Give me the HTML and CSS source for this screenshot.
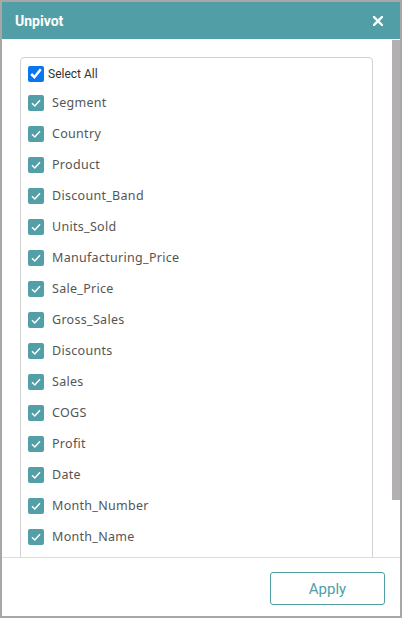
FILE: index.html
```html
<!DOCTYPE html>
<html>
<head>
<meta charset="utf-8">
<link rel="stylesheet" href="styles.css">
</head>
<body>
<div class="dialog">
  <div class="header">
    <span class="title">Unpivot</span>
    <svg class="close" width="10" height="10" viewBox="0 0 10 10"><path d="M1 1L9 9M9 1L1 9" stroke="#fff" stroke-width="2.4" stroke-linecap="square"/></svg>
  </div>
  <div class="body">
    <div class="listbox">
      <label class="all"><input type="checkbox" checked><span>Select All</span></label>
      <div class="item"><span class="cb"><svg width="16" height="16" viewBox="0 0 16 16"><path d="M4 8.2L6.8 11L12 5.2" fill="none" stroke="#fff" stroke-width="1.5"/></svg></span><span>Segment</span></div>
      <div class="item"><span class="cb"><svg width="16" height="16" viewBox="0 0 16 16"><path d="M4 8.2L6.8 11L12 5.2" fill="none" stroke="#fff" stroke-width="1.5"/></svg></span><span>Country</span></div>
      <div class="item"><span class="cb"><svg width="16" height="16" viewBox="0 0 16 16"><path d="M4 8.2L6.8 11L12 5.2" fill="none" stroke="#fff" stroke-width="1.5"/></svg></span><span>Product</span></div>
      <div class="item"><span class="cb"><svg width="16" height="16" viewBox="0 0 16 16"><path d="M4 8.2L6.8 11L12 5.2" fill="none" stroke="#fff" stroke-width="1.5"/></svg></span><span>Discount_Band</span></div>
      <div class="item"><span class="cb"><svg width="16" height="16" viewBox="0 0 16 16"><path d="M4 8.2L6.8 11L12 5.2" fill="none" stroke="#fff" stroke-width="1.5"/></svg></span><span>Units_Sold</span></div>
      <div class="item"><span class="cb"><svg width="16" height="16" viewBox="0 0 16 16"><path d="M4 8.2L6.8 11L12 5.2" fill="none" stroke="#fff" stroke-width="1.5"/></svg></span><span>Manufacturing_Price</span></div>
      <div class="item"><span class="cb"><svg width="16" height="16" viewBox="0 0 16 16"><path d="M4 8.2L6.8 11L12 5.2" fill="none" stroke="#fff" stroke-width="1.5"/></svg></span><span>Sale_Price</span></div>
      <div class="item"><span class="cb"><svg width="16" height="16" viewBox="0 0 16 16"><path d="M4 8.2L6.8 11L12 5.2" fill="none" stroke="#fff" stroke-width="1.5"/></svg></span><span>Gross_Sales</span></div>
      <div class="item"><span class="cb"><svg width="16" height="16" viewBox="0 0 16 16"><path d="M4 8.2L6.8 11L12 5.2" fill="none" stroke="#fff" stroke-width="1.5"/></svg></span><span>Discounts</span></div>
      <div class="item"><span class="cb"><svg width="16" height="16" viewBox="0 0 16 16"><path d="M4 8.2L6.8 11L12 5.2" fill="none" stroke="#fff" stroke-width="1.5"/></svg></span><span>Sales</span></div>
      <div class="item"><span class="cb"><svg width="16" height="16" viewBox="0 0 16 16"><path d="M4 8.2L6.8 11L12 5.2" fill="none" stroke="#fff" stroke-width="1.5"/></svg></span><span>COGS</span></div>
      <div class="item"><span class="cb"><svg width="16" height="16" viewBox="0 0 16 16"><path d="M4 8.2L6.8 11L12 5.2" fill="none" stroke="#fff" stroke-width="1.5"/></svg></span><span>Profit</span></div>
      <div class="item"><span class="cb"><svg width="16" height="16" viewBox="0 0 16 16"><path d="M4 8.2L6.8 11L12 5.2" fill="none" stroke="#fff" stroke-width="1.5"/></svg></span><span>Date</span></div>
      <div class="item"><span class="cb"><svg width="16" height="16" viewBox="0 0 16 16"><path d="M4 8.2L6.8 11L12 5.2" fill="none" stroke="#fff" stroke-width="1.5"/></svg></span><span>Month_Number</span></div>
      <div class="item"><span class="cb"><svg width="16" height="16" viewBox="0 0 16 16"><path d="M4 8.2L6.8 11L12 5.2" fill="none" stroke="#fff" stroke-width="1.5"/></svg></span><span>Month_Name</span></div>
      <div class="item item-hidden"></div>
    </div>
    <div class="scrollbar"></div>
  </div>
  <div class="footer">
    <button class="apply">Apply</button>
  </div>
</div>
</body>
</html>
```
FILE: styles.css
```css
* { box-sizing: border-box; }
html, body { margin: 0; padding: 0; background: #fff; }
.dialog {
  width: 402px;
  height: 618px;
  border: 2px solid #a9a7a6;
  display: flex;
  flex-direction: column;
  background: #fff;
  overflow: hidden;
}
.header {
  height: 37px;
  flex: none;
  background: #519ea6;
  display: flex;
  align-items: center;
  justify-content: space-between;
  padding: 0 17px 0 13px;
}
.title {
  font-family: Roboto, "Liberation Sans", sans-serif;
  font-weight: 700;
  font-size: 14px;
  color: #fff;
}
.close { display: block; }
.body {
  flex: 1;
  position: relative;
  overflow: hidden;
  padding: 18px 27px 0 18px;
  border-bottom: 1px solid #dcdcdc;
}
.scrollbar {
  position: absolute;
  top: 1px;
  right: 0;
  width: 8px;
  height: 460px;
  background: #b2b0b0;
}
.listbox {
  border: 1px solid #d2d2d2;
  border-radius: 4px;
  padding: 7px 6px 0 6px;
}
.all {
  display: flex;
  align-items: center;
  height: 18px;
  font-family: Roboto, "Liberation Sans", sans-serif;
  font-size: 12px;
  color: #333;
}
.all input {
  margin: 0 4px 0 1px;
  width: 16px;
  height: 16px;
  accent-color: #0a75f0;
}
.item {
  display: flex;
  align-items: center;
  height: 31px;
  font-family: "Noto Sans", "Open Sans", sans-serif;
  font-size: 12.5px;
  letter-spacing: 0.3px;
  color: #555;
}
.all + .item { margin-top: 4px; }
.cb {
  width: 16px;
  height: 16px;
  border-radius: 2px;
  background: #529fa7;
  margin: 0 8px 0 1px;
  flex: none;
}
.cb svg { display: block; }
.footer {
  height: 58px;
  flex: none;
  display: flex;
  justify-content: flex-end;
  align-items: flex-start;
  padding: 14px 15px 0 0;
}
.apply {
  width: 115px;
  height: 33px;
  border: 1px solid #519ea6;
  border-radius: 3px;
  background: #fff;
  color: #519ea6;
  font-family: Roboto, "Liberation Sans", sans-serif;
  font-size: 15px;
  padding: 0;
}
```
